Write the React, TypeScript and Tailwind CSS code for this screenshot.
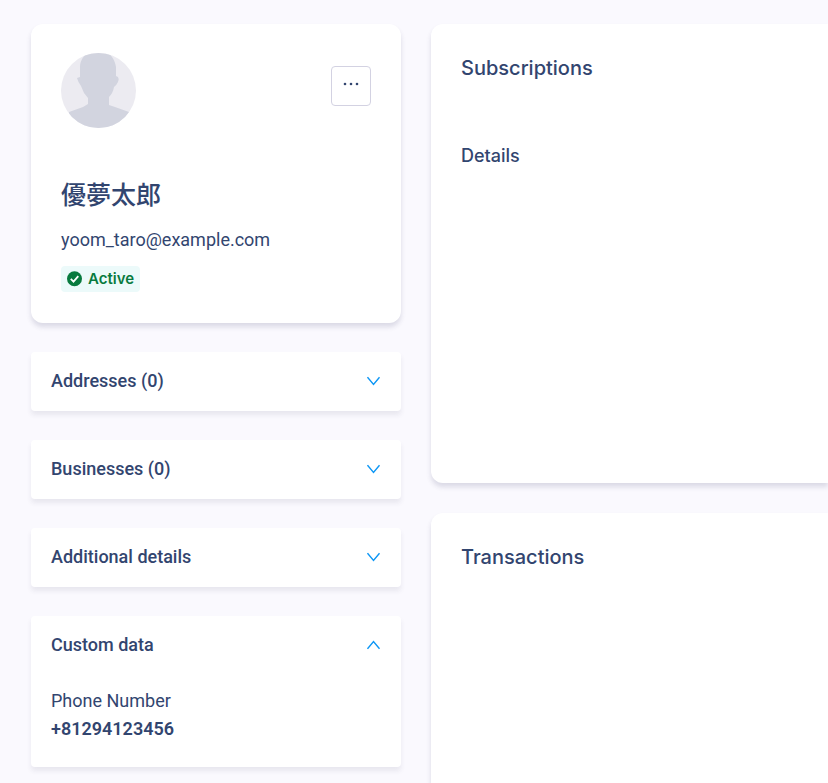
import { useState, type ReactNode } from 'react';

const shadow = 'shadow-[0_4px_5px_rgba(50,50,93,0.15)]';
const softShadow = 'shadow-[0_4px_5px_rgba(50,50,93,0.09)]';

function Avatar() {
    return (
        <svg viewBox="0 0 76 76" className="size-[76px]" role="img" aria-label="Customer avatar">
            <defs>
                <clipPath id="avatar-circle">
                    <circle cx="37.5" cy="38.5" r="37.5" />
                </clipPath>
            </defs>
            <g clipPath="url(#avatar-circle)">
                <rect width="76" height="76" fill="#ecebf1" />
                <path
                    d="M19 25V15C19 7 25 0 32 0H43C50 1 54 8 55 15V24Q59 25 57 30Q55 34 53 35Q52 41 48 45V53L54 55L68 60V76H8V60L22 55L27 52V46L23 41L20 34Q17 30 16 26Z"
                    fill="#d2d4df"
                />
            </g>
        </svg>
    );
}

function Chevron({ open }: { open: boolean }) {
    return (
        <svg viewBox="0 0 14 10" className="h-[10px] w-[14px]" fill="none" stroke="#0c96f5" strokeWidth="1.4" aria-hidden="true">
            <path d={open ? 'M0.5 8.8L6.5 1.6L12.5 8.8' : 'M0.5 1.2L6.5 8.4L12.5 1.2'} />
        </svg>
    );
}

function Panel({ title, initialOpen = false, children }: { title: string; initialOpen?: boolean; children?: ReactNode }) {
    const [open, setOpen] = useState(initialOpen);

    return (
        <section className={`rounded bg-white ${softShadow}`}>
            <h2>
                <button
                    type="button"
                    aria-expanded={open}
                    onClick={() => setOpen(!open)}
                    className="flex h-[59px] w-full items-center justify-between px-5 pb-[2px] text-[18px] font-medium"
                >
                    {title}
                    <Chevron open={open} />
                </button>
            </h2>
            {open && children}
        </section>
    );
}

export default function App() {
    return (
        <main className="flex min-h-screen gap-[30px] bg-[#faf9fe] pt-6 pl-[31px] font-['Roboto','Noto_Sans_CJK_JP',sans-serif] text-[#32456f]">

            {/* Customer column */}
            <div className="flex w-[370px] shrink-0 flex-col gap-[29px] pb-4">
                <section className={`rounded-xl bg-white px-[30px] pt-[28px] pb-[31px] ${shadow}`}>
                    <div className="flex items-center justify-between">
                        <Avatar />
                        <button
                            type="button"
                            aria-label="More actions"
                            className="mb-2 flex size-10 items-center justify-center rounded border border-[#d3d2e2]"
                        >
                            <svg viewBox="0 0 16 6" className="mb-1 h-[6px] w-4" fill="#32456f" aria-hidden="true">
                                <circle cx="2" cy="3" r="1.3" />
                                <circle cx="8" cy="3" r="1.3" />
                                <circle cx="14" cy="3" r="1.3" />
                            </svg>
                        </button>
                    </div>
                    <h1 className="mt-[50px] text-[25px] leading-9 font-medium">優夢太郎</h1>
                    <p className="mt-3 text-[18px] leading-7">yoom_taro@example.com</p>
                    <span className="mt-3 flex h-[26px] w-fit items-center gap-[5px] rounded bg-[#ecfafa] px-[6px] font-['Inter',sans-serif] text-[15px] font-semibold text-[#087a3e]">
                        <svg viewBox="0 0 16 16" className="size-4" aria-hidden="true">
                            <circle cx="7.5" cy="7.7" r="7.5" fill="#087a3e" />
                            <path d="M3.8 7.9L6.5 10.6L11.3 5.2" fill="none" stroke="#fff" strokeWidth="1.8" />
                        </svg>
                        Active
                    </span>
                </section>

                <Panel title="Addresses (0)" />
                <Panel title="Businesses (0)" />
                <Panel title="Additional details" />
                <Panel title="Custom data" initialOpen>
                    <dl className="px-5 pt-3 pb-6 text-[18px] leading-7">
                        <dt>Phone Number</dt>
                        <dd className="font-semibold">+81294123456</dd>
                    </dl>
                </Panel>
            </div>

            {/* Activity column */}
            <div className="flex min-w-0 flex-1 flex-col gap-[30px] font-['Inter',sans-serif]">
                <section className={`min-h-[459px] rounded-l-xl bg-white px-[30px] pt-[28px] ${shadow}`}>
                    <h2 className="text-[20px] leading-8 font-medium">Subscriptions</h2>
                    <h3 className="mt-[58px] text-[18px] leading-7 font-medium">Details</h3>
                </section>
                <section className={`flex-1 rounded-tl-xl bg-white px-[30px] pt-[28px] ${shadow}`}>
                    <h2 className="text-[20px] leading-8 font-medium">Transactions</h2>
                </section>
            </div>

        </main>
    );
}
